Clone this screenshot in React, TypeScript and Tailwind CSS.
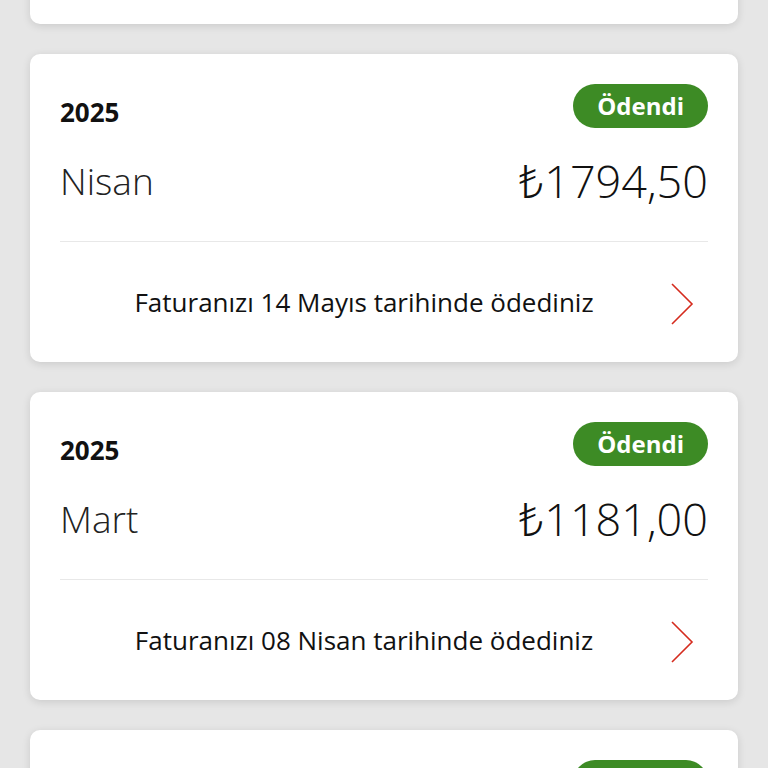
import React from 'react';

interface Bill {
  year: string;
  month: string;
  amount: string;
  paidOn: string;
}

const bills: Bill[] = [
  { year: '2025', month: 'Mayıs', amount: '₺1802,40', paidOn: 'Faturanızı 12 Haziran tarihinde ödediniz' },
  { year: '2025', month: 'Nisan', amount: '₺1794,50', paidOn: 'Faturanızı 14 Mayıs tarihinde ödediniz' },
  { year: '2025', month: 'Mart', amount: '₺1181,00', paidOn: 'Faturanızı 08 Nisan tarihinde ödediniz' },
  { year: '2025', month: 'Şubat', amount: '₺1181,00', paidOn: 'Faturanızı 10 Mart tarihinde ödediniz' },
];

const Chevron = () => (
  <svg width="26" height="42" viewBox="0 0 26 42" fill="none" className="shrink-0 mt-[4px]">
    <path d="M4 1 L24 21 L4 41" stroke="#d52b1e" strokeWidth="1.6" strokeLinejoin="miter" />
  </svg>
);

const BillCard = ({ bill }: { bill: Bill }) => (
  <div className="bg-white rounded-[10px] shadow-[0_2px_8px_rgba(0,0,0,0.12)] h-[308px] px-[30px] pt-[30px] flex flex-col shrink-0">
    <div className="flex justify-between items-start">
      <span className="mt-[15px] text-[26px] font-bold text-[#111] leading-none">{bill.year}</span>
      <span className="h-[44px] px-[24px] rounded-full bg-[#3d8b25] text-white text-[24px] font-bold flex items-center leading-none">
        Ödendi
      </span>
    </div>
    <div className="flex justify-between items-center mt-[24px] h-[56px]">
      <span className="text-[37px] font-light text-[#222] leading-none">{bill.month}</span>
      <span className="text-[45px] font-light text-[#111] leading-none">{bill.amount}</span>
    </div>
    <div className="mt-[33px] h-px bg-[#e8e8e8]" />
    <div className="flex-1 flex items-center pr-[14px]">
      <span className="flex-1 text-center text-[26px] text-[#111] leading-none">{bill.paidOn}</span>
      <Chevron />
    </div>
  </div>
);

export default function App() {
  return (
    <div
      className="w-[768px] h-[768px] overflow-hidden bg-[#e6e6e6] px-[30px]"
      style={{ fontFamily: '"Open Sans", "Noto Sans", sans-serif' }}
    >
      <div className="flex flex-col gap-[30px] mt-[-284px]">
        {bills.map((b, i) => (
          <BillCard key={i} bill={b} />
        ))}
      </div>
    </div>
  );
}
